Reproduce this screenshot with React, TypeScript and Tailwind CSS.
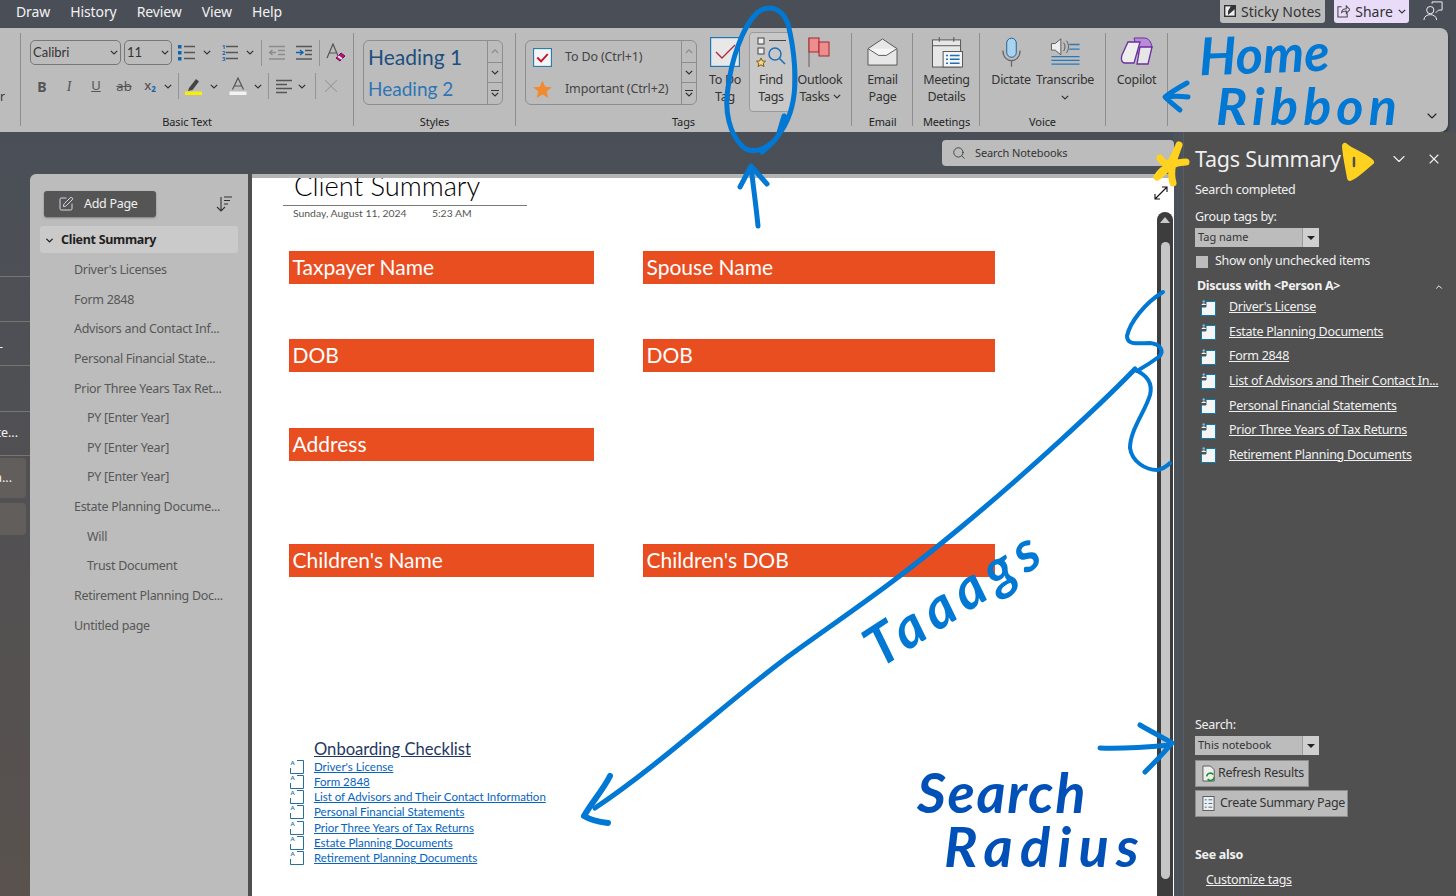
import React from 'react';
import { ChevronDown, ChevronUp, Search, X, SquarePen } from 'lucide-react';

const INK = '#0078d4';

const pages: { label: string; level: number }[] = [
  { label: "Driver's Licenses", level: 1 },
  { label: 'Form 2848', level: 1 },
  { label: 'Advisors and Contact Inf...', level: 1 },
  { label: 'Personal Financial State...', level: 1 },
  { label: 'Prior Three Years Tax Ret...', level: 1 },
  { label: 'PY [Enter Year]', level: 2 },
  { label: 'PY [Enter Year]', level: 2 },
  { label: 'PY [Enter Year]', level: 2 },
  { label: 'Estate Planning Docume...', level: 1 },
  { label: 'Will', level: 2 },
  { label: 'Trust Document', level: 2 },
  { label: 'Retirement Planning Doc...', level: 1 },
  { label: 'Untitled page', level: 1 },
];

const tagResults = [
  "Driver's License",
  'Estate Planning Documents',
  'Form 2848',
  'List of Advisors and Their Contact In...',
  'Personal Financial Statements',
  'Prior Three Years of Tax Returns',
  'Retirement Planning Documents',
];

const checklist = [
  "Driver's License",
  'Form 2848',
  'List of Advisors and Their Contact Information',
  'Personal Financial Statements',
  'Prior Three Years of Tax Returns',
  'Estate Planning Documents',
  'Retirement Planning Documents',
];

const Chev = ({ className = '' }: { className?: string }) => (
  <svg viewBox="0 0 8 5" className={`w-[8px] h-[5px] shrink-0 ${className}`} fill="none" stroke="#333" strokeWidth="1.2">
    <path d="M0.8 0.8 L4 4 L7.2 0.8" />
  </svg>
);

const Sep = () => <div className="w-[1px] h-[93px] mt-[5px] bg-[#8e8e8e] shrink-0" />;
const MiniSep = ({ className = '' }: { className?: string }) => (
  <div className={`w-[1px] h-[26px] bg-[#939393] shrink-0 ${className}`} />
);

const Group = ({ label, className, children }: { label: string; className: string; children: React.ReactNode }) => (
  <div className={`flex flex-col h-full shrink-0 ${className}`}>
    <div className="flex-1 flex min-h-0">{children}</div>
    <div className="text-center text-[11px] leading-[14px] pb-[3px] text-[#222] tracking-[-0.1px]">{label}</div>
  </div>
);

const BigButton = ({ icon, lines, className = '' }: { icon: React.ReactNode; lines: React.ReactNode[]; className?: string }) => (
  <div className={`flex flex-col items-center pt-[9px] shrink-0 text-[12.5px] leading-[17px] text-[#333] tracking-[-0.3px] ${className}`}>
    <div className="h-[30px] flex items-center justify-center">{icon}</div>
    <div className="mt-[4px] text-center whitespace-nowrap">
      {lines.map((l, i) => (
        <div key={i}>{l}</div>
      ))}
    </div>
  </div>
);

const GalleryScroll = () => (
  <div className="w-[15px] flex flex-col border-l border-[#8e8e8e] shrink-0">
    <div className="h-[21px] flex items-center justify-center">
      <svg viewBox="0 0 8 5" className="w-[8px] h-[5px]" fill="none" stroke="#8d8d8d" strokeWidth="1.2">
        <path d="M0.8 4 L4 0.8 L7.2 4" />
      </svg>
    </div>
    <div className="h-[21px] flex items-center justify-center border-y border-[#8e8e8e]">
      <Chev />
    </div>
    <div className="flex-1 flex flex-col items-center justify-center gap-[1px]">
      <div className="w-[8px] h-[1px] bg-[#333]" />
      <Chev />
    </div>
  </div>
);

const Bullets = () => (
  <svg viewBox="0 0 17 17" className="w-[17px] h-[17px] shrink-0">
    <rect x="0" y="1" width="3.5" height="3.5" fill="#0f62ac" />
    <rect x="0" y="7" width="3.5" height="3.5" fill="#0f62ac" />
    <rect x="0" y="13" width="3.5" height="3.5" fill="#0f62ac" />
    <path d="M6 2.5h11M6 8.5h11M6 14.5h11" stroke="#555" strokeWidth="1.6" />
  </svg>
);

const Numbers = () => (
  <div className="flex items-center gap-[1px] shrink-0">
    <div className="flex flex-col text-[6px] leading-[6px] font-bold text-[#0f62ac]">
      <span>1</span>
      <span>2</span>
      <span>3</span>
    </div>
    <svg viewBox="0 0 12 17" className="w-[12px] h-[17px]">
      <path d="M0 2.5h12M0 8.5h12M0 14.5h12" stroke="#555" strokeWidth="1.6" />
    </svg>
  </div>
);

const Indent = ({ dir }: { dir: 'in' | 'out' }) => (
  <svg viewBox="0 0 16 16" className="w-[16px] h-[16px] shrink-0" fill="none">
    <path d="M0 1.5h16M9 5.5h7M9 9.5h7M0 14h16" stroke={dir === 'in' ? '#555' : '#8c8c8c'} strokeWidth="1.4" />
    {dir === 'in' ? (
      <path d="M0 7.5h6M4 5l3 2.5L4 10" stroke="#0f62ac" strokeWidth="1.4" />
    ) : (
      <path d="M7 7.5H1M3.5 5L0.5 7.5 3.5 10" stroke="#8c8c8c" strokeWidth="1.4" />
    )}
  </svg>
);

const BasicText = () => (
  <div className="pt-[12px] pl-[9px] flex flex-col w-full">
    <div className="flex items-center h-[25px]">
      <div className="w-[91px] h-[25px] rounded-[5px] border border-[#777] flex items-center justify-between pl-[2px] pr-[2px] font-['Lato'] text-[13px] text-[#333]">
        Calibri
        <Chev />
      </div>
      <div className="w-[48px] h-[25px] ml-[3px] rounded-[5px] border border-[#777] flex items-center justify-between pl-[2px] pr-[2px] font-['Lato'] text-[13px] text-[#333]">
        11
        <Chev />
      </div>
      <div className="ml-[6px]">
        <Bullets />
      </div>
      <Chev className="ml-[8px]" />
      <div className="ml-[11px]">
        <Numbers />
      </div>
      <Chev className="ml-[8px]" />
      <MiniSep className="ml-[7px]" />
      <div className="ml-[7px]">
        <Indent dir="out" />
      </div>
      <div className="ml-[11px]">
        <Indent dir="in" />
      </div>
      <MiniSep className="ml-[7px]" />
      <svg viewBox="0 0 20 20" className="w-[20px] h-[20px] ml-[6px] shrink-0">
        <path d="M1 15 L7 1 L12 13 M3.5 10h7" fill="none" stroke="#555" strokeWidth="1.2" />
        <path d="M10 15 L15 10 L19 13 L14 18 Z" fill="#b5127a" stroke="#7d0c55" />
        <path d="M12 13.2 L16 16" stroke="#eee" strokeWidth="2" />
      </svg>
    </div>
    <div className="flex items-center h-[28px] mt-[7px] text-[#555]">
      <span className="w-[12px] ml-[6px] font-bold text-[14px] text-center">B</span>
      <span className="w-[12px] ml-[15px] italic text-[14px] text-center font-['Liberation_Serif']">I</span>
      <span className="w-[12px] ml-[15px] underline text-[13px] text-center">U</span>
      <span className="w-[20px] ml-[12px] line-through text-[13px] text-center leading-none">ab</span>
      <span className="w-[16px] ml-[8px] text-[13px] font-medium text-center">
        x<sub className="text-[8px] text-[#0f62ac] font-bold">2</sub>
      </span>
      <Chev className="ml-[6px]" />
      <MiniSep className="ml-[6px]" />
      <svg viewBox="0 0 18 18" className="w-[18px] h-[18px] ml-[6px] shrink-0">
        <path d="M4 11 L11 2 L14 4.5 L7.5 13 L3 14 Z" fill="#444" />
        <rect x="0" y="14.5" width="17" height="3.5" fill="#f8f000" />
      </svg>
      <Chev className="ml-[7px]" />
      <svg viewBox="0 0 18 18" className="w-[18px] h-[18px] ml-[11px] shrink-0">
        <path d="M3.5 12.5 L9 1 L14.5 12.5 M5.5 9h7" fill="none" stroke="#555" strokeWidth="1.2" />
        <rect x="0.5" y="14.5" width="17" height="3.5" fill="#f3f3f3" />
      </svg>
      <Chev className="ml-[7px]" />
      <MiniSep className="ml-[6px]" />
      <svg viewBox="0 0 16 15" className="w-[16px] h-[15px] ml-[7px] shrink-0">
        <path d="M0 1.5h16M0 5.5h11M0 9.5h16M0 13.5h11" stroke="#555" strokeWidth="1.5" />
      </svg>
      <Chev className="ml-[6px]" />
      <MiniSep className="ml-[9px]" />
      <X className="w-[22px] h-[22px] ml-[4px] text-[#969696]" strokeWidth={1.1} />
    </div>
  </div>
);

const Ribbon = () => (
  <div className="w-[1448px] h-[104px] shrink-0 bg-[#bcbcbc] rounded-r-lg shadow-[0_2px_3px_rgba(0,0,0,0.45)] flex">
    <div className="w-[20px] shrink-0 relative text-[12px] text-[#333]">
      <span className="absolute left-0 top-[61px] leading-[16px]">r</span>
    </div>
    <Sep />
    <Group label="Basic Text" className="w-[332px]">
      <BasicText />
    </Group>
    <Sep />
    <Group label="Styles" className="w-[161px]">
      <div className="ml-[9px] mt-[12px] w-[140px] h-[65px] rounded-[6px] border border-[#8e8e8e] flex overflow-hidden">
        <div className="flex-1 pl-[4px] font-['Lato'] whitespace-nowrap">
          <div className="h-[33px] text-[21px] leading-[31px] text-[#1c4f7f]">Heading 1</div>
          <div className="text-[19px] leading-[29px] text-[#2e75b6]">Heading 2</div>
        </div>
        <GalleryScroll />
      </div>
    </Group>
    <Sep />
    <Group label="Tags" className="w-[335px]">
      <div className="ml-[9px] mt-[12px] w-[172px] h-[65px] rounded-[6px] border border-[#8e8e8e] flex overflow-hidden shrink-0">
        <div className="flex-1 text-[12.5px] text-[#444] whitespace-nowrap tracking-[-0.15px]">
          <div className="h-[33px] flex items-center pl-[7px]">
            <svg viewBox="0 0 20 20" className="w-[19px] h-[19px] shrink-0">
              <rect x="0.6" y="0.6" width="18.8" height="18.8" fill="#f5f5f5" stroke="#2a7ea8" strokeWidth="1.2" />
              <path d="M4.5 10 L8.5 14 L15.5 6.5" fill="none" stroke="#c8102e" strokeWidth="2" />
            </svg>
            <span className="ml-[13px]">To Do (Ctrl+1)</span>
          </div>
          <div className="h-[31px] flex items-center pl-[7px]">
            <svg viewBox="0 0 20 20" className="w-[19px] h-[19px] shrink-0">
              <path d="M10 0.5 L12.8 7 L19.8 7.5 L14.4 12 L16.2 19 L10 15.2 L3.8 19 L5.6 12 L0.2 7.5 L7.2 7 Z" fill="#f28a30" />
            </svg>
            <span className="ml-[13px]">Important (Ctrl+2)</span>
          </div>
        </div>
        <GalleryScroll />
      </div>
      <BigButton
        className="w-[44px] ml-[6px]"
        lines={['To Do', 'Tag']}
        icon={
          <svg viewBox="0 0 30 30" className="w-[30px] h-[30px]">
            <rect x="0.6" y="0.6" width="28.8" height="28.8" fill="#e8e8e8" stroke="#1f78b4" strokeWidth="1.2" />
            <path d="M6 15 L12 21 L25 8" fill="none" stroke="#b02a3a" strokeWidth="1.4" />
          </svg>
        }
      />
      <div className="mt-[4px] ml-[2px] w-[44px] h-[80px] rounded-[4px] border border-[#9a9a9a] bg-[#c8c8c8] shrink-0">
        <BigButton
          className="!pt-[4px]"
          lines={['Find', 'Tags']}
          icon={
            <svg viewBox="0 0 32 32" className="w-[32px] h-[32px]">
              <rect x="3" y="2" width="6" height="6" fill="#eee" stroke="#444" />
              <rect x="3" y="12" width="6" height="6" fill="#eee" stroke="#444" />
              <path d="M14 4.5h17" stroke="#444" />
              <path d="M6 22 L7.4 25 L10.5 25.2 L8.2 27.3 L9 30.5 L6 28.8 L3 30.5 L3.8 27.3 L1.5 25.2 L4.6 25 Z" fill="#f6d98a" stroke="#7c5a10" />
              <circle cx="20" cy="18" r="6" fill="none" stroke="#1f6fb5" strokeWidth="1.5" />
              <path d="M24.5 22.5 L30 28" stroke="#1f6fb5" strokeWidth="1.6" />
            </svg>
          }
        />
      </div>
      <BigButton
        className="w-[50px] ml-[2px]"
        lines={[
          'Outlook',
          <span key="t" className="inline-flex items-center gap-[3px]">
            Tasks <Chev />
          </span>,
        ]}
        icon={
          <svg viewBox="0 0 24 30" className="w-[24px] h-[30px]">
            <path d="M1 1v29" stroke="#8a7a7a" strokeWidth="1.5" />
            <rect x="1" y="1" width="10" height="14" fill="#ee8d8d" stroke="#a4262c" />
            <rect x="11" y="5" width="10" height="14" fill="#ee8d8d" stroke="#a4262c" />
          </svg>
        }
      />
    </Group>
    <Sep />
    <Group label="Email" className="w-[60px] pl-[1px]">
      <BigButton
        className="w-full"
        lines={['Email', 'Page']}
        icon={
          <svg viewBox="0 0 32 30" className="w-[31px] h-[29px]">
            <path d="M1 11 L16 1 L31 11 V28 H1 Z" fill="#e7e7e7" stroke="#555" />
            <path d="M1 11 L12 18 H20 L31 11" fill="#f5f5f5" stroke="#555" />
          </svg>
        }
      />
    </Group>
    <Sep />
    <Group label="Meetings" className="w-[66px] pl-[1px]">
      <BigButton
        className="w-full"
        lines={['Meeting', 'Details']}
        icon={
          <svg viewBox="0 0 32 32" className="w-[32px] h-[31px]">
            <rect x="1" y="3" width="29" height="28" fill="#e7e7e7" stroke="#555" />
            <path d="M1 9h29M8 0v5M23 0v5" stroke="#555" />
            <rect x="12" y="15" width="20" height="16" fill="#f5f5f5" stroke="#555" />
            <path d="M15 19h2M19 19h10M15 23h2M19 23h10M15 27h2M19 27h10" stroke="#1f6fb5" strokeWidth="1.5" />
          </svg>
        }
      />
    </Group>
    <Sep />
    <Group label="Voice" className="w-[125px]">
      <BigButton
        className="w-[50px] ml-[6px]"
        lines={['Dictate']}
        icon={
          <svg viewBox="0 0 22 32" className="w-[21px] h-[31px]">
            <rect x="6" y="1" width="10" height="20" rx="5" fill="#a9d3f0" stroke="#1d5f92" />
            <path d="M2 14 C2 28 20 28 20 14 M11 25v6" fill="none" stroke="#666" strokeWidth="1.3" />
          </svg>
        }
      />
      <BigButton
        className="w-[58px]"
        lines={['Transcribe', <Chev key="c" className="mx-auto mt-[7px]" />]}
        icon={
          <svg viewBox="0 0 32 32" className="w-[31px] h-[30px]">
            <path d="M1 7h4l6-5v17l-6-5H1z" fill="#eee" stroke="#555" />
            <path d="M14 6c2 3 2 6 0 9M17 4c3 4 3 9 0 13" fill="none" stroke="#555" />
            <path d="M20 8h11M20 13h11M1 21h30M1 25h30M1 29h30" stroke="#2a78b8" strokeWidth="1.4" />
          </svg>
        }
      />
    </Group>
    <Sep />
    <Group label=" " className="w-[61px]">
      <BigButton
        className="w-full"
        lines={['Copilot']}
        icon={
          <svg viewBox="0 0 34 30" className="w-[34px] h-[30px]">
            <path d="M14 1 H24 C29 1 31 5 32 10 L28 24 H20 Z" fill="#b98ad6" stroke="#6b2fa0" />
            <path d="M8 5 H20 L14 26 H5 C1 26 1 21 2 18 Z" fill="#eee" stroke="#6b2fa0" strokeWidth="1.3" />
            <path d="M20 10 H32 L28 27 H17 Z" fill="#e6e6e6" stroke="#6b2fa0" strokeWidth="1.3" />
          </svg>
        }
      />
    </Group>
    <Sep />
    <div className="flex-1 flex items-end justify-end pr-[8px] pb-[8px]">
      <ChevronDown className="w-[16px] h-[16px] text-[#222]" strokeWidth={1.6} />
    </div>
  </div>
);

const TopBar = () => (
  <div className="h-[28px] shrink-0 flex items-start text-[14px] text-[#f2f2f2]">
    <div className="flex pl-[16px] pt-[2px] leading-[20px] gap-[20px] tracking-[-0.1px]">
      <span>Draw</span>
      <span>History</span>
      <span>Review</span>
      <span>View</span>
      <span>Help</span>
    </div>
    <div className="ml-auto flex items-start">
      <div className="w-[105px] h-[23px] bg-[#bcbcbc] rounded-b-[3px] text-[#333] flex items-center justify-center gap-[5px] pb-[1px]">
        <svg viewBox="0 0 12 12" className="w-[12px] h-[12px]">
          <rect x="0.7" y="0.7" width="10.6" height="10.6" fill="#eee" stroke="#333" strokeWidth="1.4" />
          <path d="M4 10 L11 4 V1 H7 L4 6z" fill="#333" />
        </svg>
        Sticky Notes
      </div>
      <div className="w-[75px] h-[23px] ml-[9px] bg-[#e8dcf8] rounded-b-[3px] text-[#333] flex items-center justify-center gap-[5px] pb-[1px]">
        <svg viewBox="0 0 14 14" className="w-[13px] h-[13px]" fill="none" stroke="#444" strokeWidth="1.1">
          <path d="M5 2H1v11h10v-4M5 8c0-3 3-4 5-4V1l4 4-4 4V6.5c-2 0-4 .5-5 1.5z" />
        </svg>
        Share
        <Chev />
      </div>
      <svg viewBox="0 0 22 22" className="w-[20px] h-[20px] ml-[14px] mr-[13px] mt-[1px]" fill="none" stroke="#eee" strokeWidth="1.1">
        <circle cx="8" cy="10" r="4" />
        <path d="M1 21c0-8 14-8 14 0M10 3V1h11v9h-4l-3 3" />
      </svg>
    </div>
  </div>
);

const LeftStrip = () => (
  <div className="w-[30px] shrink-0 pt-[102px] text-[12.5px] text-[#f0f0f0] overflow-hidden whitespace-nowrap">
    <div className="h-[46px] border-t border-b border-[#787472]" />
    <div className="h-[44px] border-b border-[#787472] flex items-end justify-start pb-[12px] leading-none">
      <span className="-ml-[1px]">-</span>
    </div>
    <div className="h-[46px] border-b border-[#787472]" />
    <div className="h-[44px] border-b border-[#787472] flex items-center justify-end pr-[12px]">te...</div>
    <div className="h-[40px] mt-[2px] w-[26px] rounded-r-[4px] bg-[#625e5c] flex items-center justify-end pr-[14px]">a...</div>
    <div className="h-[32px] mt-[5px] w-[26px] rounded-r-[4px] bg-[#625e5c]" />
  </div>
);

const PageList = () => (
  <div className="w-[218px] shrink-0 bg-[#bcbcbc] rounded-tl-[6px] pl-[10px] pr-[10px] pt-[17px] text-[12.5px] whitespace-nowrap tracking-[-0.3px]">
    <div className="flex items-center justify-between pl-[4px] pr-[6px]">
      <div className="w-[112px] h-[26px] bg-[#555555] rounded-[3px] shadow-[0_1px_2px_rgba(0,0,0,0.35)] text-[#f0f0f0] flex items-center pl-[14px] gap-[10px]">
        <SquarePen className="w-[16px] h-[16px] text-[#e6dff2]" strokeWidth={1.4} />
        <span>Add Page</span>
      </div>
      <svg viewBox="0 0 16 16" className="w-[16px] h-[16px]" fill="none" stroke="#333" strokeWidth="1.1">
        <path d="M5 1v14M1 11l4 4 4-4M8 1h8M8 4.5h6M8 8h4" />
      </svg>
    </div>
    <div className="mt-[9px] h-[27px] rounded-[3px] bg-[#cacaca] flex items-center pl-[4px] gap-[6px] font-bold text-[#1f1f1f] pt-[1px]">
      <ChevronDown className="w-[11px] h-[11px]" strokeWidth={3} />
      Client Summary
    </div>
    <div className="mt-[2.5px]">
      {pages.map((p, i) => (
        <div
          key={i}
          className={`h-[29.65px] flex items-center text-[#575757] ${p.level === 2 ? 'pl-[47px]' : 'pl-[34px]'}`}
        >
          {p.label}
        </div>
      ))}
    </div>
  </div>
);

const OrangeBar = ({ label, className }: { label: string; className: string }) => (
  <div className={`h-[33px] bg-[#e94e20] border-l border-t border-[#f0451b] pl-[2.5px] text-white font-['Lato'] text-[21px] leading-[30px] whitespace-nowrap ${className}`}>
    {label}
  </div>
);

const NotePage = () => (
  <div className="flex-1 bg-white flex flex-col min-w-0">
    <div className="h-[4px] bg-[#b4b4b4] shrink-0" />
    <div className="flex-1 flex min-h-0">
      <div className="w-[905px] shrink-0 pl-[37px] font-['Lato'] overflow-hidden">
        <div className="w-[244px] -ml-[6px] h-[28px] border-b border-[#7a7a7a] pl-[11px] overflow-hidden">
          <div className="-mt-[9px] text-[27.3px] leading-[34px] text-black whitespace-nowrap font-light">Client Summary</div>
        </div>
        <div className="flex pl-[4px] text-[10.4px] leading-[15px] text-[#555] whitespace-nowrap">
          <span className="w-[139px]">Sunday, August 11, 2024</span>
          <span>5:23 AM</span>
        </div>
        <div className="flex mt-[30px]">
          <OrangeBar label="Taxpayer Name" className="w-[305px]" />
          <OrangeBar label="Spouse Name" className="w-[352px] ml-[49px]" />
        </div>
        <div className="flex mt-[55px]">
          <OrangeBar label="DOB" className="w-[305px]" />
          <OrangeBar label="DOB" className="w-[352px] ml-[49px]" />
        </div>
        <div className="flex mt-[56px]">
          <OrangeBar label="Address" className="w-[305px]" />
        </div>
        <div className="flex mt-[83px]">
          <OrangeBar label="Children's Name" className="w-[305px]" />
          <OrangeBar label="Children's DOB" className="w-[352px] ml-[49px]" />
        </div>
        <div className="mt-[160px] pl-[25px] text-[16.6px] leading-[24px] underline text-[#1f3864]">Onboarding Checklist</div>
        <div className="mt-[-2px] text-[11.5px] leading-[15.15px] text-[#0563c1]">
          {checklist.map((c) => (
            <div key={c} className="flex items-center h-[15.15px] whitespace-nowrap">
              <svg viewBox="0 0 14 15" className="w-[14px] h-[15px] ml-[1px] shrink-0" fill="none" stroke="#2a6f97">
                <path d="M7 1.5h6.5v13H0.5V9" />
                <text x="0.5" y="6" fontSize="6" fontWeight="700" fill="#2a6f97" stroke="none">A</text>
              </svg>
              <span className="ml-[10px] underline">{c}</span>
            </div>
          ))}
        </div>
      </div>
      <div className="w-[16px] shrink-0 flex flex-col">
        <div className="h-[34px] flex items-start justify-center pt-[8px]">
          <svg viewBox="0 0 14 14" className="w-[14px] h-[14px] -ml-[8px]" fill="none" stroke="#111" strokeWidth="1.1">
            <path d="M1 13 L13 1 M8 1h5v5M1 8v5h5" />
          </svg>
        </div>
        <div className="flex-1 rounded-t-full bg-[#3d3d3d] flex flex-col items-center pt-[5px]">
          <div className="w-0 h-0 border-x-[5px] border-x-transparent border-b-[6px] border-b-[#c8c8c8]" />
          <div className="w-[9px] h-[637px] mt-[19px] rounded-full bg-[#c6c6c6]" />
        </div>
      </div>
      <div className="w-[1px] shrink-0" />
    </div>
  </div>
);

const NoteIcon = () => (
  <svg viewBox="0 0 15 16" className="w-[15px] h-[16px] shrink-0">
    <path d="M5 1.5h9.5v14H0.5V7H5z" fill="#f5f5f5" stroke="#0f7aa8" strokeWidth="1" />
    <rect x="0" y="0" width="5" height="7" fill="#505050" />
    <circle cx="2.7" cy="1.5" r="1.2" fill="#66c4ee" />
    <path d="M0.5 5c0-2 4.5-2 4.5 0z" fill="#f5f5f5" />
  </svg>
);

const PanelSelect = ({ label }: { label: string }) => (
  <div className="w-[124px] h-[19px] bg-[#bcbcbc] flex items-center text-[11px] text-[#333] tracking-normal">
    <span className="flex-1 pl-[3px]">{label}</span>
    <span className="w-[17px] h-full bg-[#cfcfcf] border-l border-[#9a9a9a] flex items-center justify-center">
      <span className="w-0 h-0 border-x-[4px] border-x-transparent border-t-[4px] border-t-[#222]" />
    </span>
  </div>
);

const TagsPanel = () => (
  <div className="w-[273px] shrink-0 bg-[#505050] border-l border-[#5c5c5c] text-[12.5px] text-[#f0f0f0] flex flex-col pl-[11px] whitespace-nowrap tracking-[-0.3px]">
    <div className="h-[44px] mt-[5px] flex items-center justify-between pr-[14px] shrink-0">
      <span className="text-[21.5px] text-[#efefef] tracking-[-0.25px]">Tags Summary</span>
      <div className="flex items-center gap-[17px]">
        <ChevronDown className="w-[20px] h-[20px] text-[#eee]" strokeWidth={1.4} />
        <X className="w-[16px] h-[16px] text-[#eee]" strokeWidth={1.6} />
      </div>
    </div>
    <div className="leading-[17px]">Search completed</div>
    <div className="leading-[17px] mt-[10px]">Group tags by:</div>
    <div className="mt-[3px]">
      <PanelSelect label="Tag name" />
    </div>
    <div className="flex items-center mt-[6px] h-[17px]">
      <div className="w-[12px] h-[12px] bg-[#bcbcbc] ml-[1px]" />
      <span className="ml-[7px]">Show only unchecked items</span>
    </div>
    <div className="flex items-center justify-between mt-[8px] h-[17px] pr-[12px] pl-[2px] font-bold">
      <span>Discuss with &lt;Person A&gt;</span>
      <ChevronUp className="w-[10px] h-[10px]" strokeWidth={2.4} />
    </div>
    <div className="mt-[0.5px]">
      {tagResults.map((t) => (
        <div key={t} className="h-[24.55px] flex items-center pl-[6px]">
          <NoteIcon />
          <span className="ml-[13px] underline">{t}</span>
        </div>
      ))}
    </div>
    <div className="flex-1" />
    <div className="leading-[17px]">Search:</div>
    <div className="mt-[3px]">
      <PanelSelect label="This notebook" />
    </div>
    <div className="mt-[5px] w-[114px] h-[27px] bg-[#bcbcbc] border border-[#8d8d8d] flex items-center pl-[6px] gap-[1px] text-[#333]">
      <svg viewBox="0 0 16 18" className="w-[15px] h-[17px] shrink-0">
        <path d="M1 1h8l4 4v12H1z" fill="#eee" stroke="#555" />
        <path d="M5 12a4 4 0 0 1 7-2M13 13a4 4 0 0 1-7 2" fill="none" stroke="#1a8f2d" strokeWidth="1.7" />
      </svg>
      Refresh Results
    </div>
    <div className="mt-[3px] w-[153px] h-[27px] bg-[#bcbcbc] border border-[#8d8d8d] flex items-center pl-[6px] gap-[5px] text-[#333]">
      <svg viewBox="0 0 14 16" className="w-[13px] h-[15px] shrink-0" fill="none">
        <rect x="1" y="0.5" width="12" height="15" fill="#eee" stroke="#555" />
        <path d="M3 4h2M7 4h4M3 8h2M7 8h4M3 12h2M7 12h4" stroke="#2a6f97" />
      </svg>
      Create Summary Page
    </div>
    <div className="mt-[29px] font-bold leading-[17px]">See also</div>
    <div className="mt-[8px] mb-[8px] pl-[11px] leading-[17px] underline">Customize tags</div>
  </div>
);

// hand-drawn annotations on top of the app; the written words stay real text
const InkOverlay = () => (
  <div className="absolute inset-0 pointer-events-none overflow-hidden">
    <svg viewBox="0 0 1456 896" className="absolute inset-0 w-full h-full" fill="none" strokeLinecap="round" strokeLinejoin="round">
      <g stroke={INK} strokeWidth="5">
        <path d="M784 116 L778 136 C770 148 752 156 742 146 C730 134 724 112 728 88 C731 62 742 26 758 12 C770 4 782 8 788 24 C794 48 798 82 792 106 C788 124 776 142 762 152" />
        <path d="M758 226 C756 205 753 185 751 166 M740 187 L751 166 L767 184" />
        <path d="M1188 97 C1180 96 1172 96 1166 97 M1187 83 C1178 88 1171 92 1165 97 C1170 102 1175 106 1180 110" />
        <path d="M1163 292 C1145 303 1130 322 1127 336 C1127 346 1140 343 1150 343 C1160 344 1164 350 1160 356 C1152 362 1144 367 1137 371" strokeWidth="4" />
        <path d="M1135 370 C1147 375 1153 383 1150 395 C1145 412 1130 430 1130 448 C1132 462 1146 470 1157 470 C1163 469 1167 466 1170 463" strokeWidth="4" />
        <path d="M1135 369 C1100 405 1030 470 960 528 S850 612 793 653 S660 765 595 808" />
        <path d="M610 776 C603 790 592 802 584 816 C592 821 600 822 608 823" strokeWidth="6" />
        <path d="M1100 748 C1122 749 1148 747 1170 745 M1140 725 C1150 731 1162 737 1172 743 C1164 753 1154 763 1145 772" />
      </g>
      <g stroke="#ffd21f" strokeWidth="6">
        <path d="M1157 177 C1163 166 1178 162 1186 162 C1176 162 1164 168 1160 158 M1179 145 C1175 156 1169 170 1173 183 M1157 177 C1166 172 1172 162 1179 145" strokeWidth="7" />
        <path d="M1345 146 C1346 160 1349 170 1350 178 C1356 176 1366 166 1371 162 C1365 156 1352 152 1345 146 Z" fill="#ffd21f" />
      </g>
      <path d="M1354 158 v8" stroke="#505050" strokeWidth="2.5" />
    </svg>
    <span className="absolute left-[1199px] top-[29px] font-['Lato'] italic font-bold text-[52px] leading-[48px] text-[#0078d4] -rotate-2">Home</span>
    <span className="absolute left-[1216px] top-[79px] font-['Lato'] italic font-bold text-[52px] leading-[52px] tracking-[0.1em] text-[#0078d4]">Ribbon</span>
    <span className="absolute left-[852px] top-[568px] font-['Lato'] italic font-bold text-[56px] leading-[56px] tracking-[0.12em] text-[#0078d4] -rotate-[33deg]">Taaags</span>
    <span className="absolute left-[917px] top-[766px] font-['Lato'] italic font-bold text-[56px] leading-[52px] tracking-[0.03em] text-[#0050b8]">Search</span>
    <span className="absolute left-[944px] top-[820px] font-['Lato'] italic font-bold text-[56px] leading-[52px] tracking-[0.13em] text-[#0050b8]">Radius</span>
  </div>
);

export default function App() {
  return (
    <div className="relative w-[1456px] h-[896px] overflow-hidden bg-[#4a4f57] font-['Noto_Sans',sans-serif] flex flex-col">
      <TopBar />
      <Ribbon />
      <div className="flex-1 flex min-h-0">
        <div className="w-[1174px] shrink-0 flex flex-col bg-linear-to-b from-[#4a4f57] to-[#59524e]">
          <div className="h-[42px] shrink-0 flex justify-end pt-[8px]">
            <div className="w-[232px] h-[26px] bg-[#bcbcbc] rounded-[4px] flex items-center pl-[10px] gap-[9px] text-[11px] text-[#333] tracking-[-0.1px]">
              <Search className="w-[14px] h-[14px]" strokeWidth={1.4} />
              Search Notebooks
            </div>
          </div>
          <div className="flex-1 flex min-h-0">
            <LeftStrip />
            <PageList />
            <div className="w-[4px] bg-[#505050] shrink-0" />
            <NotePage />
          </div>
        </div>
        <div className="w-[9px] shrink-0 bg-[#4c525a]" />
        <TagsPanel />
      </div>
      <InkOverlay />
    </div>
  );
}
